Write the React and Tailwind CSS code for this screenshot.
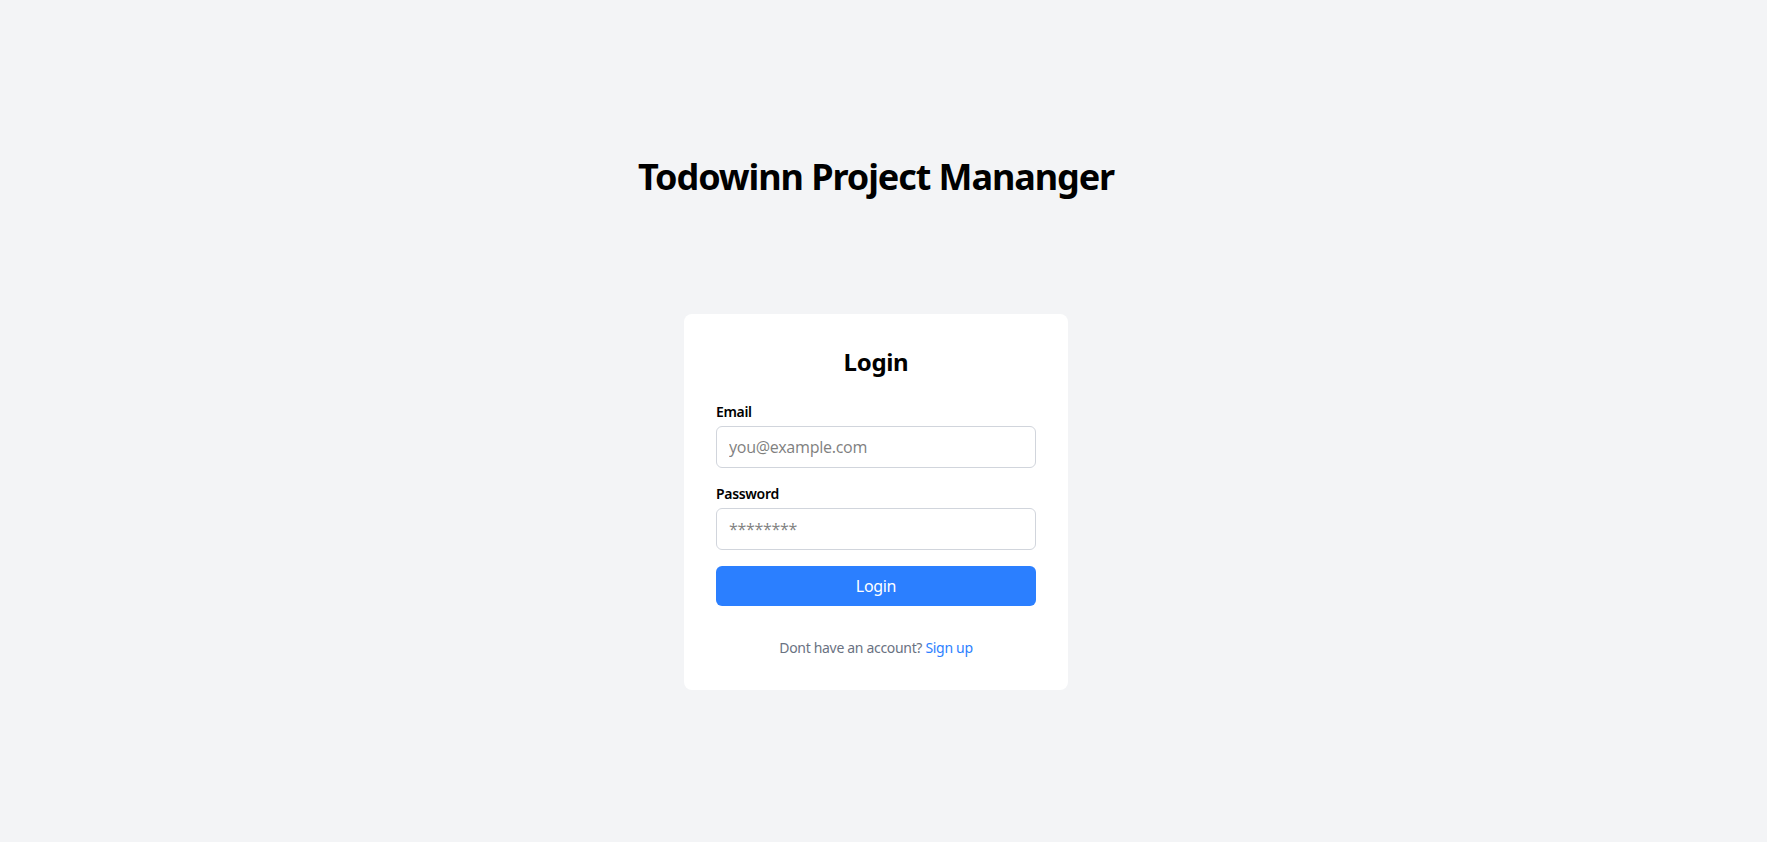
import React, { useState } from 'react';

export default function App() {
  const [email, setEmail] = useState('');
  const [password, setPassword] = useState('');

  return (
    <div
      className="min-h-screen bg-gray-100 flex flex-col items-center pt-[157px] pr-[15px] text-black tracking-[-0.02em]"
      style={{ fontFamily: '"Noto Sans", "Open Sans", sans-serif' }}
    >
      <h1 className="text-4xl font-bold tracking-[-0.03em] mb-[117px]">Todowinn Project Mananger</h1>

      <div className="w-full max-w-sm bg-white rounded-lg p-8">
        <h2 className="text-2xl font-bold text-center mb-6">Login</h2>
        <form onSubmit={(e) => e.preventDefault()}>
          <label htmlFor="email" className="block text-sm font-semibold mb-1">
            Email
          </label>
          <input
            id="email"
            type="email"
            value={email}
            onChange={(e) => setEmail(e.target.value)}
            placeholder="you@example.com"
            className="w-full px-3 py-2 border border-gray-300 rounded-md text-base mb-4 focus:outline-none"
          />
          <label htmlFor="password" className="block text-sm font-semibold mb-1">
            Password
          </label>
          <input
            id="password"
            type="password"
            value={password}
            onChange={(e) => setPassword(e.target.value)}
            placeholder="********"
            className="w-full px-3 py-2 border border-gray-300 rounded-md text-base mb-4 focus:outline-none"
          />
          <button
            type="submit"
            className="w-full py-2 bg-blue-500 text-white rounded-md text-base"
          >
            Login
          </button>
        </form>
        <p className="mt-8 text-sm text-center text-gray-500">
          Dont have an account? <a href="#" className="text-blue-500">Sign up</a>
        </p>
      </div>
    </div>
  );
}
